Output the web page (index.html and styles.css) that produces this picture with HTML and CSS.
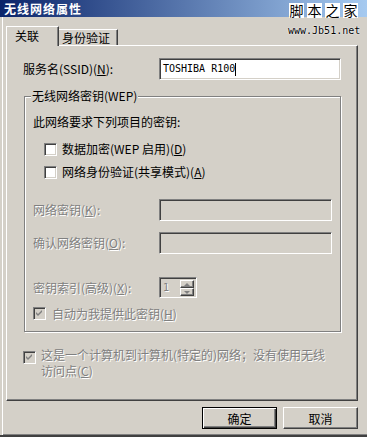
FILE: index.html
```html
<!DOCTYPE html>
<html lang="zh-CN">
  <head>
    <meta charset="UTF-8" />
    <title>无线网络属性</title>
    <link rel="stylesheet" href="styles.css">
  </head>
  <body>
    <div class="window">
      <div class="titlebar">无线网络属性</div>

      <div class="watermark">
        <div class="wm-chars"><span>脚</span><span>本</span><span>之</span><span>家</span></div>
        <div class="wm-url">www.Jb51.net</div>
      </div>

      <div class="tabs">
        <div class="tab active">关联</div>
        <div class="tab">身份验证</div>
      </div>

      <div class="panel">
        <div class="ssid-row">
          <label>服务名(SSID)(<u>N</u>):</label>
          <div class="edit ssid">TOSHIBA R100<span class="caret"></span></div>
        </div>

        <fieldset class="group">
          <legend>无线网络密钥(WEP)</legend>
          <p class="note">此网络要求下列项目的密钥:</p>

          <div class="check-row indent first">
            <span class="check"></span>
            <span class="check-label">数据加密(WEP 启用)(<u>D</u>)</span>
          </div>
          <div class="check-row indent second">
            <span class="check"></span>
            <span class="check-label">网络身份验证(共享模式)(<u>A</u>)</span>
          </div>

          <div class="field-row key1 disabled">
            <label>网络密钥(<u>K</u>):</label>
            <div class="edit off"></div>
          </div>
          <div class="field-row key2 disabled">
            <label>确认网络密钥(<u>O</u>):</label>
            <div class="edit off"></div>
          </div>
          <div class="field-row spin-row disabled">
            <label>密钥索引(高级)(<u>X</u>):</label>
            <div class="spin">
              <span class="spin-val">1</span>
              <span class="spin-btns">
                <span class="spin-btn"><i class="arrow up"></i></span>
                <span class="spin-btn"><i class="arrow down"></i></span>
              </span>
            </div>
          </div>

          <div class="check-row auto disabled">
            <span class="check off">
              <svg viewBox="0 0 7 7" width="7" height="7"><path d="M0 2 L2 4 L6 0 L6 2 L2 6 L0 4 Z" fill="#808080"/></svg>
            </span>
            <span class="check-label">自动为我提供此密钥(<u>H</u>)</span>
          </div>
        </fieldset>

        <div class="adhoc disabled">
          <span class="check off">
            <svg viewBox="0 0 7 7" width="7" height="7"><path d="M0 2 L2 4 L6 0 L6 2 L2 6 L0 4 Z" fill="#808080"/></svg>
          </span>
          <span class="adhoc-label">这是一个计算机到计算机(特定的)网络；没有使用无线<br>访问点(<u>C</u>)</span>
        </div>
      </div>

      <div class="buttons">
        <button class="btn default">确定</button>
        <button class="btn">取消</button>
      </div>
    </div>
  </body>
</html>
```

FILE: styles.css
```css
* {
  margin: 0;
  padding: 0;
  box-sizing: border-box;
}

body {
  width: 367px;
  height: 437px;
  overflow: hidden;
  background-color: #d4d0c8;
  color: #000000;
  font-family: "Noto Sans CJK SC", sans-serif;
  font-size: 12px;
  line-height: 14px;
}

.window {
  position: relative;
  height: 437px;
  padding: 0 9px 0 6px;
  border-bottom: 2px solid #404040;
  box-shadow: inset 2px 0 0 #d4d0c8, inset 3px 0 0 #ffffff, inset 0 -1px 0 #808080;
}

.titlebar {
  height: 17px;
  margin: 0 -9px 0 -6px;
  padding-left: 4px;
  background: linear-gradient(to right, #0a246a, #a6caf0);
  color: #ffffff;
  font-weight: bold;
  line-height: 17px;
  letter-spacing: 1px;
}

/* site watermark on top of the title bar */
.watermark {
  position: absolute;
  top: 3px;
  left: 289px;
}

.wm-chars {
  display: flex;
  gap: 3px;
}

.wm-chars span {
  width: 15px;
  height: 15px;
  background-color: #ffffff;
  font-size: 14px;
  line-height: 15px;
  text-align: center;
}

.wm-url {
  margin-top: 8px;
  margin-left: -1px;
  font-family: "DejaVu Sans Mono", monospace;
  font-size: 10px;
  line-height: 10px;
  text-shadow: 0 0 2px #ffffff, 0 0 1px #ffffff;
}

/* tabs */
.tabs {
  position: relative;
  z-index: 1;
  display: flex;
  align-items: flex-end;
  height: 20px;
  margin-top: 9px;
  margin-bottom: -1px;
}

.tab {
  height: 16px;
  margin-bottom: 1px;
  padding: 1px 0 0 3px;
  width: 59px;
  border-top: 1px solid #ffffff;
  border-right: 1px solid #404040;
  box-shadow: inset -1px 0 0 #808080;
  background-color: #d4d0c8;
}

.tab.active {
  width: 53px;
  height: 20px;
  margin-bottom: 0;
  padding: 2px 0 0 8px;
  border-left: 1px solid #ffffff;
}

/* tab page */
.panel {
  height: 356px;
  padding: 12px 16px 0 16px;
  border-top: 1px solid #ffffff;
  border-left: 1px solid #ffffff;
  border-right: 1px solid #404040;
  border-bottom: 1px solid #404040;
  box-shadow: inset -1px -1px 0 #808080;
}

.ssid-row {
  display: grid;
  grid-template-columns: 136px 1fr;
  align-items: center;
}

.field-row {
  display: grid;
  grid-template-columns: 126px 1fr;
  align-items: center;
}

.edit {
  height: 22px;
  border: 1px solid;
  border-color: #808080 #ffffff #ffffff #808080;
  box-shadow: inset 1px 1px 0 #404040, inset -1px -1px 0 #d4d0c8;
  background-color: #ffffff;
}

.edit.off {
  background-color: #d4d0c8;
}

.ssid {
  display: flex;
  align-items: center;
  padding-left: 3px;
  font-family: "DejaVu Sans Mono", monospace;
  font-size: 10px;
}

.caret {
  width: 1px;
  height: 13px;
  background-color: #000000;
}

.group {
  margin: 9px 0 0 1px;
  padding: 0 8px 11px 8px;
  border: 1px solid #808080;
  box-shadow: inset 1px 1px 0 #ffffff, 1px 1px 0 #ffffff;
  min-width: 0;
}

.group legend {
  margin-left: -2px;
  padding: 0 1px;
  background-color: #d4d0c8;
}

.note {
  margin-top: 12px;
}

.check-row {
  display: flex;
  align-items: center;
}

.check-row.indent {
  height: 22px;
  margin-left: 11px;
}

.check-row.first {
  margin-top: 9px;
}

.check-row.second {
  margin-top: 1px;
}

.check {
  display: flex;
  align-items: center;
  justify-content: center;
  flex-shrink: 0;
  width: 13px;
  height: 13px;
  border: 1px solid;
  border-color: #808080 #ffffff #ffffff #808080;
  box-shadow: inset 1px 1px 0 #404040, inset -1px -1px 0 #d4d0c8;
  background-color: #ffffff;
}

.check.off {
  background-color: #d4d0c8;
}

.check-label {
  margin-left: 5px;
}

.key1 {
  margin-top: 16px;
}

.key2 {
  margin-top: 11px;
}

.spin-row {
  margin-top: 23px;
}

.disabled {
  color: #808080;
  text-shadow: 1px 1px 0 #ffffff;
}

.spin {
  display: flex;
  width: 38px;
  height: 21px;
  border: 1px solid;
  border-color: #808080 #ffffff #ffffff #808080;
  box-shadow: inset 1px 1px 0 #404040, inset -1px -1px 0 #d4d0c8;
  padding: 2px 2px 1px 2px;
}

.spin-val {
  flex: 1;
  padding-left: 1px;
  font-family: "DejaVu Sans Mono", monospace;
  font-size: 10px;
  line-height: 15px;
}

.spin-btns {
  display: flex;
  flex-direction: column;
  width: 14px;
}

.spin-btn {
  display: flex;
  align-items: center;
  justify-content: center;
  flex: 1;
  border: 1px solid;
  border-color: #ffffff #404040 #404040 #ffffff;
  box-shadow: inset -1px -1px 0 #808080;
}

.arrow {
  width: 0;
  height: 0;
  border-left: 3px solid transparent;
  border-right: 3px solid transparent;
}

.arrow.up {
  border-bottom: 3px solid #808080;
}

.arrow.down {
  border-top: 3px solid #808080;
}

.check-row.auto {
  margin-top: 9px;
  height: 13px;
}

.check-row.auto .check-label {
  margin-left: 6px;
}

.adhoc {
  display: flex;
  align-items: flex-start;
  margin-top: 15px;
}

.adhoc .check {
  margin-top: 4px;
}

.adhoc-label {
  margin-left: 5px;
  line-height: 16px;
}

/* dialog buttons */
.buttons {
  display: flex;
  justify-content: flex-end;
  gap: 6px;
  margin-top: 6px;
}

.btn {
  width: 75px;
  height: 22px;
  border: 1px solid;
  border-color: #ffffff #404040 #404040 #ffffff;
  box-shadow: inset -1px -1px 0 #808080;
  background-color: #d4d0c8;
  font-family: "Noto Sans CJK SC", sans-serif;
  font-size: 12px;
  color: #000000;
}

.btn.default {
  border: 1px solid #000000;
  box-shadow: inset 1px 1px 0 #ffffff, inset -1px -1px 0 #404040, inset -2px -2px 0 #808080;
}
```
